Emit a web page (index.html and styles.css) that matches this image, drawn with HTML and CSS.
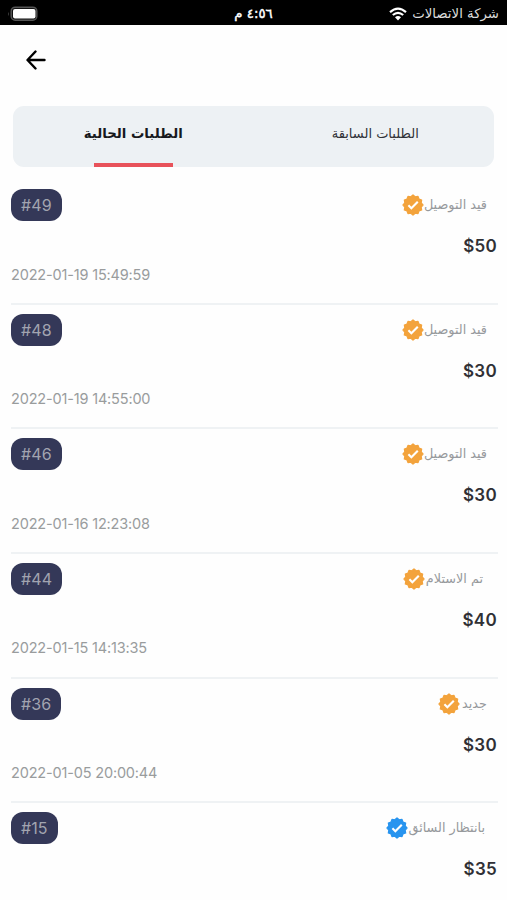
FILE: index.html
```html
<!DOCTYPE html>
<html lang="ar">
<head>
<meta charset="utf-8">
<meta name="viewport" content="width=device-width, initial-scale=1">
<title>الطلبات</title>
<link rel="stylesheet" href="styles.css">
</head>
<body>
<svg class="defs" aria-hidden="true"><symbol id="verified" viewBox="-12 -12 24 24"><path class="seal" d="M10.900 0L8.890 2.380L9.440 5.450L6.510 6.510L5.450 9.440L2.380 8.890L0 10.900L-2.380 8.890L-5.450 9.440L-6.510 6.510L-9.440 5.450L-8.890 2.380L-10.900 0L-8.890 -2.380L-9.440 -5.450L-6.510 -6.510L-5.450 -9.440L-2.380 -8.890L0 -10.900L2.380 -8.890L5.450 -9.440L6.510 -6.510L9.440 -5.450L8.890 -2.380Z"/><path class="tick" d="M-5 .4L-1.800 3.600L5.200 -3.500"/></symbol></svg>
<header class="status">
  <svg class="battery" viewBox="0 0 30 16"><path d="M1 6q-1.4 2 0 4z" fill="#555"/><rect x="3.2" y="1.2" width="25.6" height="13" rx="4" fill="#111" stroke="#555" stroke-width="1.5"/><rect x="5" y="3" width="22.5" height="9.500" rx="2" fill="#fff"/></svg>
  <span class="time" dir="rtl">٤:٥٦ م</span>
  <div class="carrier"><svg class="wifi" viewBox="0 0 18 14"><path d="M1 5.2q8-7 16 0M3.800 8q5.200-4.400 10.400 0"/><path class="dot" d="M6 10.200q3-2.400 6 0L9 13.400z"/></svg><span dir="rtl">شركة الاتصالات</span></div>
</header>
<nav class="bar"><svg class="back" viewBox="0 0 20 20"><path d="M9.500 1.500L1.500 10l8 8.500M2 10h16.500"/></svg></nav>
<div class="tabs"><div class="tab active" dir="rtl"><span>الطلبات الحالية</span></div><div class="tab" dir="rtl"><span>الطلبات السابقة</span></div></div>
<main class="orders">
  <article class="order"><div class="top"><span class="id">#49</span><div class="state"><svg><use href="#verified"/></svg><span dir="rtl">قيد التوصيل</span></div></div><div class="price">$50</div><time>2022-01-19 15:49:59</time></article>
  <article class="order"><div class="top"><span class="id">#48</span><div class="state"><svg><use href="#verified"/></svg><span dir="rtl">قيد التوصيل</span></div></div><div class="price">$30</div><time>2022-01-19 14:55:00</time></article>
  <article class="order"><div class="top"><span class="id">#46</span><div class="state"><svg><use href="#verified"/></svg><span dir="rtl">قيد التوصيل</span></div></div><div class="price">$30</div><time>2022-01-16 12:23:08</time></article>
  <article class="order received"><div class="top"><span class="id">#44</span><div class="state"><svg><use href="#verified"/></svg><span dir="rtl">تم الاستلام</span></div></div><div class="price">$40</div><time>2022-01-15 14:13:35</time></article>
  <article class="order new"><div class="top"><span class="id">#36</span><div class="state"><svg><use href="#verified"/></svg><span dir="rtl">جديد</span></div></div><div class="price">$30</div><time>2022-01-05 20:00:44</time></article>
  <article class="order waiting"><div class="top"><span class="id">#15</span><div class="state"><svg><use href="#verified"/></svg><span dir="rtl">بانتظار السائق</span></div></div><div class="price">$35</div></article>
</main>
</body>
</html>
```
FILE: styles.css
```css
* { box-sizing: border-box; }
body { margin: 0; height: 900px; overflow: hidden; background: #fefefe; font-family: Inter, "DejaVu Sans", sans-serif; color: #303035; }
.defs { position: absolute; width: 0; height: 0; }
.status { height: 25px; background: #000; color: #fff; display: grid; grid-template-columns: 1fr auto 1fr; align-items: center; padding: 2px 8px 0 8px; font: 13.300px/20px "DejaVu Sans", sans-serif; }
.time { -webkit-text-stroke: .4px #fff; }
.battery { width: 30px; height: 16px; }
.carrier { display: flex; justify-content: flex-end; align-items: center; gap: 5px; color: #ddd; }
.wifi { width: 18px; height: 14px; fill: none; stroke: #fff; stroke-width: 2.2; }
.wifi .dot { fill: #fff; stroke: none; }
.bar { height: 81px; padding: 25px 0 0 26px; }
.back { display: block; width: 20px; height: 20px; fill: none; stroke: #000; stroke-width: 2.4; stroke-linecap: round; stroke-linejoin: round; }
.tabs { display: grid; grid-template-columns: 1fr 1fr; width: 481px; height: 61px; margin-left: 13px; background: #edf1f4; border-radius: 11px; }
.tab { display: flex; flex-direction: column; align-items: center; justify-content: space-between; padding: 18px 0 0 3px; font: 13px/20px "DejaVu Sans", sans-serif; color: #303238; }
.active { padding-left: 0; font-size: 13.300px; font-weight: 700; color: #17191d; }
.active::after { content: ""; width: 79px; height: 4px; background: #e8525a; }
.orders { padding: 11px 9px 0 11px; }
.order { height: 124.65px; padding-top: 11px; }
.order + .order { background: linear-gradient(#eff2f4, #eff2f4) 0 0 / 100% 2px no-repeat; }
.top { display: flex; justify-content: space-between; height: 32px; }
.id { height: 32px; padding: 0 10px; border-radius: 12px; background: #343858; color: #a2a4b0; font: 16px/32px Inter, sans-serif; letter-spacing: .1px; }
.state { --seal: #f3a33c; display: flex; align-items: center; margin-right: 11px; font: 12.800px/20px "DejaVu Sans", sans-serif; color: #96999c; }
.state svg { width: 22px; height: 22px; }
.seal { fill: var(--seal); stroke: var(--seal); stroke-width: 1.4; stroke-linejoin: round; }
.tick { fill: none; stroke: #fff; stroke-width: 2.300; }
.received .state { margin-right: 15px; }
.received .state span { margin-left: 1px; }
.new .state span { margin-left: 2px; }
.waiting .state { --seal: #2894ef; margin-right: 13px; }
.price { margin-top: 14px; height: 22px; padding-right: 1px; text-align: right; font: 600 17px/22px Inter, sans-serif; letter-spacing: .3px; }
.order time { display: block; margin-top: 7.500px; font: 14.500px/20px Inter, sans-serif; letter-spacing: -.17px; color: #999c9d; }
```
